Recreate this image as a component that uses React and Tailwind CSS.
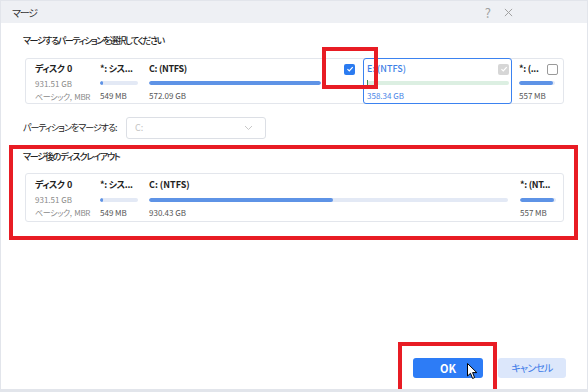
import React from 'react';

const jp = 'tracking-[-1.2px]';

function Check({ kind }) {
  if (kind === 'empty') {
    return <span className="w-[11px] h-[11px] rounded-[2px] border border-[#9a9a9a] bg-white shrink-0" />;
  }
  const bg = kind === 'on' ? 'bg-[#2b7bf0]' : 'bg-[#d6d6d6]';
  return (
    <span className={`w-[11px] h-[11px] rounded-[2px] ${bg} flex items-center justify-center shrink-0`}>
      <svg width="8" height="8" viewBox="0 0 10 10">
        <path d="M1.8 5.2 L4.1 7.4 L8.4 2.6" fill="none" stroke="white" strokeWidth="1.5" />
      </svg>
    </span>
  );
}

function Bar({ width, fill }) {
  return (
    <div className="h-[4px] rounded-full bg-[#e3e9f5] overflow-hidden" style={{ width }}>
      <div className="h-full rounded-full bg-[#5e93e6]" style={{ width: fill }} />
    </div>
  );
}

function DiskInfo() {
  return (
    <div className="w-[65px] flex flex-col shrink-0">
      <span className="text-[9px] leading-[14px] font-bold text-[#222] tracking-[-0.6px] whitespace-pre">ディスク  0</span>
      <span className="text-[8px] leading-[13px] text-[#8a8a8a] mt-[1px]">931.51 GB</span>
      <span className="text-[8px] leading-[13px] text-[#8a8a8a] tracking-[-0.4px] whitespace-pre">ベーシック,  MBR</span>
    </div>
  );
}

function Part({ label, size, bar, fill, w, className = '', check }) {
  return (
    <div className={`flex flex-col shrink-0 ${className}`} style={{ width: w }}>
      <div className="flex items-center justify-between h-[14px]">
        <span className="text-[9px] leading-[14px] font-bold text-[#222] whitespace-nowrap tracking-[-0.3px]">{label}</span>
        {check}
      </div>
      <div className="mt-[5px]">
        <Bar width={bar} fill={fill} />
      </div>
      <span className="text-[8px] leading-[13px] text-[#555] mt-[4px]">{size}</span>
    </div>
  );
}

export default function App() {
  return (
    <div className="relative w-[588px] h-[392px] bg-white border-x border-t border-b-[3px] border-[#e2e5eb] flex flex-col overflow-hidden font-['Noto_Sans_CJK_JP','Noto_Sans',sans-serif] [font-feature-settings:'palt']">
      {/* タイトルバー */}
      <div className="h-[22px] bg-[#eef0f4] flex items-center justify-between pl-[11px] pr-[74px] shrink-0">
        <span className={`text-[10px] text-[#333] ${jp}`}>マージ</span>
        <div className="flex items-center gap-[13px] text-[#a0a0a0]">
          <span className="text-[13px] leading-none">?</span>
          <svg width="9" height="9" viewBox="0 0 10 10">
            <path d="M1 1 L9 9 M9 1 L1 9" stroke="#a0a0a0" strokeWidth="1.1" />
          </svg>
        </div>
      </div>

      <div className="flex-1 flex flex-col px-[22px] pt-[11px]">
        <h2 className="text-[9px] leading-[14px] font-medium text-[#222] tracking-[-1.4px]">マージするパーティションを選択してください</h2>

        {/* 選択カード */}
        <div className="mt-[10px] ml-[2px] w-[539px] h-[46px] border border-[#e3e6ec] rounded-[3px] flex pl-[9px]">
          <div className="pt-[3px] flex">
            <DiskInfo />
            <Part label="*: シス..." size="549 MB" bar={38} fill={3} w={49} />
            <Part
              label="C: (NTFS)"
              size="572.09 GB"
              bar={172}
              fill={172}
              w={210}
              className="pr-[4px]"
              check={<Check kind="on" />}
            />
          </div>
          <div className="-my-px ml-[4px] w-[149px] border border-[#3b82f0] rounded-[3px] pl-[3px] pr-[2px] pt-[3px] flex flex-col">
            <div className="flex items-center justify-between h-[14px]">
              <span className="text-[9px] leading-[14px] font-medium text-[#3d7fe6]">E: (NTFS)</span>
              <Check kind="gray" />
            </div>
            <div className="mt-[5px] h-[4px] w-[142px] bg-[#dcefe2] rounded-full relative">
              <div className="absolute left-0 top-[-1px] w-[1px] h-[6px] bg-[#3c8a55]" />
            </div>
            <span className="text-[8px] leading-[13px] text-[#4a86e8] mt-[4px]">358.34 GB</span>
          </div>
          <div className="pt-[3px] ml-[7px]">
            <Part label="*: (..." size="557 MB" bar={36} fill={34} w={39} check={<Check kind="empty" />} />
          </div>
        </div>

        {/* マージ先 */}
        <div className="mt-[13px] flex items-center">
          <span className="text-[9px] text-[#222] w-[103px] whitespace-nowrap tracking-[-1px]">パーティションをマージする:</span>
          <div className="w-[140px] h-[22px] border border-[#dcdfe5] rounded-[3px] flex items-center justify-between pl-[8px] pr-[12px]">
            <span className="text-[9px] text-[#c4c4c4]">C:</span>
            <svg width="9" height="6" viewBox="0 0 9 6">
              <path d="M1 1 L4.5 4.5 L8 1" fill="none" stroke="#c8c8c8" strokeWidth="1" />
            </svg>
          </div>
        </div>

        <h2 className={`mt-[11px] text-[9px] leading-[14px] font-medium text-[#222] ${jp}`}>マージ後のディスクレイアウト</h2>

        {/* レイアウトカード */}
        <div className="mt-[9px] ml-[2px] w-[539px] h-[49px] border border-[#e3e6ec] rounded-[3px] flex pl-[9px] pt-[4px]">
          <DiskInfo />
          <div className="flex flex-col shrink-0 w-[49px]">
            <span className="text-[9px] leading-[14px] font-bold text-[#222] whitespace-nowrap tracking-[-0.3px]">*: シス...</span>
            <div className="mt-[6px]"><Bar width={38} fill={3} /></div>
            <span className="text-[8px] leading-[13px] text-[#555] mt-[4px]">549 MB</span>
          </div>
          <div className="flex flex-col shrink-0 w-[371px]">
            <span className="text-[9px] leading-[14px] font-bold text-[#222]">C: (NTFS)</span>
            <div className="mt-[6px]"><Bar width={359} fill={184} /></div>
            <span className="text-[8px] leading-[13px] text-[#555] mt-[4px]">930.43 GB</span>
          </div>
          <div className="flex flex-col shrink-0 w-[40px]">
            <span className="text-[9px] leading-[14px] font-bold text-[#222] whitespace-nowrap tracking-[-0.3px]">*: (NT...</span>
            <div className="mt-[6px]"><Bar width={36} fill={34} /></div>
            <span className="text-[8px] leading-[13px] text-[#555] mt-[4px]">557 MB</span>
          </div>
        </div>
      </div>

      {/* ボタン */}
      <div className="flex justify-end gap-[15px] pr-[21px] pb-[11px] shrink-0">
        <button className="w-[70px] h-[20px] rounded-[3px] bg-[#2d7cf6] text-white text-[11px] font-bold leading-none">OK</button>
        <button className="w-[68px] h-[20px] rounded-[3px] bg-[#dce7fb] text-[#3b7ae8] text-[10px] leading-none tracking-[-0.8px]">キャンセル</button>
      </div>

      {/* 注釈の赤枠 */}
      <div className="absolute left-[321px] top-[46px] w-[56px] h-[42px] border-[4px] border-[#e81c24]" />
      <div className="absolute left-[8px] top-[144px] w-[569px] h-[95px] border-[4px] border-[#e81c24]" />
      <div className="absolute left-[397px] top-[341px] w-[99px] h-[51px] border-[4px] border-[#e81c24]" />

      {/* カーソル */}
      <svg className="absolute left-[466px] top-[362px]" width="11" height="17" viewBox="0 0 11 17">
        <path d="M0.5 0.5 L0.5 13 L3.5 10.3 L5.6 15.5 L7.6 14.6 L5.6 9.6 L9.8 9.6 Z" fill="white" stroke="black" strokeWidth="1" strokeLinejoin="round" />
      </svg>
    </div>
  );
}
